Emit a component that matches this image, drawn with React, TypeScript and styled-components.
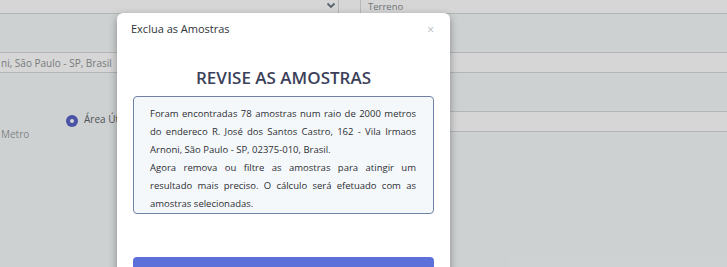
import React from "react";
import styled, { createGlobalStyle } from "styled-components";

const Global = createGlobalStyle`
  html, body { margin: 0; padding: 0; }
  body {
    width: 727px; height: 267px; overflow: hidden;
    font-family: "Open Sans", "Noto Sans", sans-serif;
    background: #ffffff;
  }
`;

const Page = styled.div`
  position: relative;
  width: 727px;
  height: 267px;
  overflow: hidden;
  background: #f6fafa;
`;

const TopBar = styled.div`
  display: flex;
  align-items: flex-start;
  height: 14px;
  background: #ffffff;
  border-bottom: 1px solid #d3d9dc;
  box-sizing: border-box;
`;

const Chevron = styled.div`
  margin-left: 324px;
  width: 14px;
  height: 10px;
  display: flex;
  align-items: center;
  justify-content: center;
  color: #6a7684;
`;

const Divider = styled.div<{ $w: number }>`
  width: ${(p) => p.$w}px;
  height: 13px;
  border-left: 1px solid #d8dde0;
  box-sizing: border-box;
`;

const TopText = styled.span`
  font-size: 9.5px;
  color: #868c90;
  padding-left: 7px;
  border-left: 1px solid #d8dde0;
  line-height: 13px;
`;

const Band = styled.div<{ $h: number }>`
  height: ${(p) => p.$h}px;
  box-sizing: border-box;
  border-bottom: 1px solid #d3d9dc;
`;

const InputRow = styled.div`
  height: 20px;
  box-sizing: border-box;
  background: #ffffff;
  border-bottom: 1px solid #d3d9dc;
  display: flex;
  align-items: center;
  overflow: hidden;
`;

const InputText = styled.span`
  font-size: 10px;
  color: #8f9496;
  white-space: nowrap;
  padding-left: 1px;
`;

const Section = styled.div`
  display: grid;
  grid-template-columns: 300px 1fr;
  height: 38px;
`;

const LeftArea = styled.div`
  display: flex;
  flex-direction: column;
`;

const RadioLine = styled.div`
  display: flex;
  align-items: center;
  gap: 6px;
  padding-left: 66px;
  height: 16px;
`;

const Radio = styled.span`
  width: 12px;
  height: 12px;
  border-radius: 50%;
  background: #5964c6;
  display: flex;
  align-items: center;
  justify-content: center;
  margin-top: 4px;
  &::after {
    content: "";
    width: 4px;
    height: 4px;
    border-radius: 50%;
    background: #ffffff;
  }
`;

const RadioLabel = styled.span`
  font-size: 10px;
  color: #5d6468;
`;

const Metro = styled.span`
  font-size: 10px;
  line-height: 14px;
  color: #999fa2;
  padding-left: 1px;
`;

const RightInput = styled.div`
  height: 21px;
  background: #ffffff;
  border-top: 1px solid #d3d9dc;
  border-bottom: 1px solid #d3d9dc;
  box-sizing: border-box;
`;

const Overlay = styled.div`
  position: absolute;
  inset: 0;
  background: rgba(0, 0, 0, 0.16);
`;

const Modal = styled.div`
  position: absolute;
  left: 117px;
  top: 13px;
  width: 333px;
  height: 280px;
  background: #ffffff;
  border-radius: 6px;
  box-shadow: 0 3px 9px rgba(0, 0, 0, 0.35);
  display: flex;
  flex-direction: column;
`;

const Header = styled.div`
  display: flex;
  align-items: center;
  justify-content: space-between;
  height: 38px;
  padding: 1px 16px 0 14px;
  box-sizing: border-box;
`;

const HeaderTitle = styled.span`
  font-size: 11px;
  color: #2f3338;
`;

const Close = styled.span`
  font-size: 12px;
  color: #b4b8bc;
  line-height: 1;
  padding-top: 2px;
`;

const Body = styled.div`
  padding: 24px 16px 0 16px;
  display: flex;
  flex-direction: column;
`;

const Title = styled.h1`
  margin: 0;
  text-align: center;
  font-size: 17px;
  line-height: 22px;
  font-weight: 600;
  color: #3c3f5a;
`;

const InfoBox = styled.div`
  margin-top: 7px;
  border: 1px solid #7182a6;
  border-radius: 4px;
  background: #f5f8fb;
  padding: 8px 17px 8px 16px;
  box-sizing: border-box;
  height: 118px;
`;

const InfoText = styled.p`
  margin: 0;
  font-size: 9.5px;
  line-height: 18px;
  color: #2c2f33;
  text-align: justify;
`;

const Button = styled.div`
  margin-top: 43px;
  height: 36px;
  border-radius: 4px;
  background: #5d6fd9;
`;

export default function App() {
  return (
    <>
      <Global />
      <Page>
        <TopBar>
          <Chevron>
            <svg width="10" height="7" viewBox="0 0 10 7">
              <path d="M1.5 1.5 L5 5 L8.5 1.5" stroke="currentColor" strokeWidth="1.8" fill="none" />
            </svg>
          </Chevron>
          <Divider $w={22} />
          <TopText>Terreno</TopText>
        </TopBar>
        <Band $h={39} />
        <InputRow>
          <InputText>ni, São Paulo - SP, Brasil</InputText>
        </InputRow>
        <Section>
          <LeftArea />
          <div />
        </Section>
        <Section>
          <LeftArea>
            <RadioLine>
              <Radio />
              <RadioLabel>Área Útil</RadioLabel>
            </RadioLine>
            <Metro>Metro</Metro>
          </LeftArea>
          <RightInput />
        </Section>
        <Overlay />
        <Modal>
          <Header>
            <HeaderTitle>Exclua as Amostras</HeaderTitle>
            <Close>×</Close>
          </Header>
          <Body>
            <Title>REVISE AS AMOSTRAS</Title>
            <InfoBox>
              <InfoText>
                Foram encontradas 78 amostras num raio de 2000 metros do endereco R. José dos Santos Castro, 162 - Vila Irmaos Arnoni, São Paulo - SP, 02375-010, Brasil.
              </InfoText>
              <InfoText>
                Agora remova ou filtre as amostras para atingir um resultado mais preciso. O cálculo será efetuado com as amostras selecionadas.
              </InfoText>
            </InfoBox>
            <Button />
          </Body>
        </Modal>
      </Page>
    </>
  );
}
